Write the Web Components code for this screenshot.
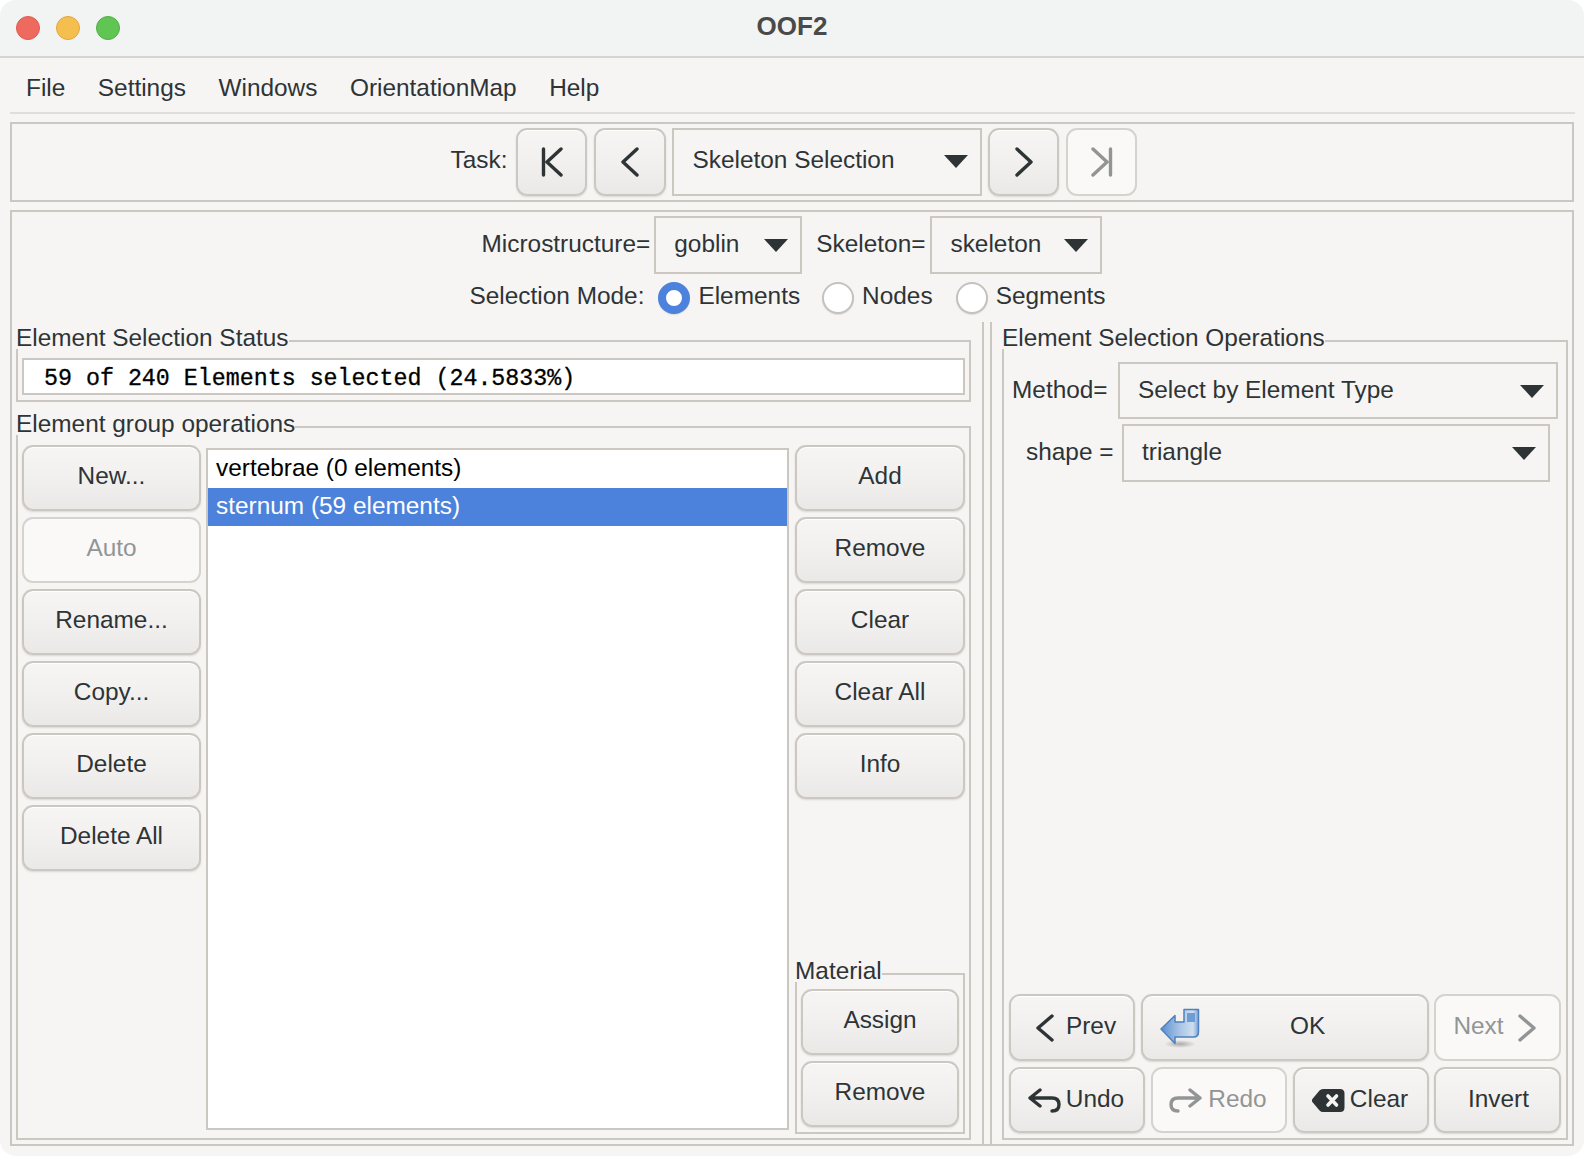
<!DOCTYPE html>
<html>
<head>
<meta charset="utf-8">
<title>OOF2</title>
<style>
  html, body { margin: 0; background: #fff; }
  body { font: 24.4px "Liberation Sans", Arial, sans-serif; color: #2e3436; }
</style>
</head>
<body>
<oof-window>
  <oof-taskbar></oof-taskbar>
  <oof-selection-page></oof-selection-page>
</oof-window>

<script>
const LINE = "#cdc7c2";

class OofWindow extends HTMLElement {
  constructor() {
    super();
    this.attachShadow({ mode: "open" });
  }
  connectedCallback() {
    this.shadowRoot.innerHTML = `
      <style>
        :host {
          display: flex;
          flex-direction: column;
          width: 1584px;
          height: 1156px;
          background: #f6f5f4;
          border-radius: 16px;
          overflow: hidden;
        }
        .title {
          flex: none;
          height: 58px;
          padding-bottom: 4px;
          box-sizing: border-box;
          display: flex;
          align-items: center;
          justify-content: center;
          position: relative;
          background: #f2f4f3;
          border-bottom: 2px solid #d6d3d1;
          font-weight: bold;
          font-size: 26px;
          color: #4a4a4a;
        }
        .lights { position: absolute; left: 16px; top: 16px; display: flex; gap: 16px; }
        .lights i { width: 24px; height: 24px; border-radius: 50%; box-sizing: border-box; }
        .r { background: #ee6a5f; border: 1px solid #dd5a50; }
        .y { background: #f5bf4f; border: 1px solid #dfa73f; }
        .g { background: #61c554; border: 1px solid #52ad46; }
        nav {
          flex: none;
          height: 56px;
          box-sizing: border-box;
          margin: 0 9px 8px 10px;
          padding: 6px 0 0 16px;
          display: flex;
          align-items: center;
          gap: 32.5px;
          border-bottom: 2px solid #e0dedb;
        }
      </style>
      <div class="title">
        <div class="lights"><i class="r"></i><i class="y"></i><i class="g"></i></div>
        OOF2
      </div>
      <nav>
        <span>File</span><span>Settings</span><span>Windows</span><span>OrientationMap</span><span>Help</span>
      </nav>
      <slot></slot>
    `;
  }
}
customElements.define("oof-window", OofWindow);

class OofButton extends HTMLElement {
  constructor() {
    super();
    this.attachShadow({ mode: "open" });
  }
  connectedCallback() {
    this.shadowRoot.innerHTML = `
      <style>
        :host {
          display: flex;
          box-sizing: border-box;
          height: 66px;
          flex: none;
          align-items: center;
          justify-content: center;
          gap: 7px;
          padding-bottom: 5px;
          border: 2px solid ${LINE};
          border-radius: 11px;
          background: linear-gradient(#f6f5f4, #f2f1f0 45%, #ebe9e7);
          box-shadow: inset 0 1px 0 #fff, 0 1px 2px rgba(0,0,0,.12);
          white-space: nowrap;
        }
        :host([disabled]) {
          background: #faf9f8;
          color: #929595;
          box-shadow: none;
          border-color: #d6d2ce;
        }
        ::slotted(svg) { flex: none; display: block; }
      </style>
      <slot name="icon"></slot><slot></slot>
    `;
  }
}
customElements.define("oof-button", OofButton);

class OofCombo extends HTMLElement {
  constructor() {
    super();
    this.attachShadow({ mode: "open" });
  }
  connectedCallback() {
    this.shadowRoot.innerHTML = `
      <style>
        :host {
          display: flex;
          box-sizing: border-box;
          flex: none;
          height: 58px;
          align-items: center;
          justify-content: space-between;
          padding: 0 12px 3px 18px;
          border: 2px solid ${LINE};
        }
        i {
          width: 0; height: 0;
          margin-top: 3px;
          border-left: 12px solid transparent;
          border-right: 12px solid transparent;
          border-top: 13px solid #2e3436;
        }
      </style>
      <span><slot></slot></span><i></i>
    `;
  }
}
customElements.define("oof-combo", OofCombo);

class OofRadio extends HTMLElement {
  constructor() {
    super();
    this.attachShadow({ mode: "open" });
  }
  connectedCallback() {
    this.shadowRoot.innerHTML = `
      <style>
        :host {
          display: flex;
          align-items: center;
          gap: 8px;
          height: 32px;
        }
        i {
          flex: none;
          width: 32px; height: 32px;
          box-sizing: border-box;
          border-radius: 50%;
          background: #fff;
          border: 2px solid #c6c1bc;
          box-shadow: 0 1px 1px rgba(0,0,0,.1);
        }
        :host([checked]) i {
          background: #fff;
          border: 8px solid #4c82dc;
        }
        span { margin-top: -5px; }
      </style>
      <i></i><span><slot></slot></span>
    `;
  }
}
customElements.define("oof-radio", OofRadio);

class OofFrame extends HTMLElement {
  constructor() {
    super();
    this.attachShadow({ mode: "open" });
  }
  connectedCallback() {
    this.shadowRoot.innerHTML = `
      <style>
        :host { display: flex; flex-direction: column; box-sizing: border-box; }
        .head { flex: none; display: flex; height: 25px; }
        .label { height: 28px; line-height: 28px; white-space: nowrap; }
        .line {
          flex: 1;
          margin-top: 16px;
          border-top: 2px solid ${LINE};
          border-right: 2px solid ${LINE};
        }
        .body {
          flex: 1;
          min-height: 0;
          display: flex;
          flex-direction: var(--frame-dir, column);
          padding: var(--frame-pad, 0);
          gap: var(--frame-gap, 0);
          border: 2px solid ${LINE};
          border-top: 0;
        }
      </style>
      <div class="head"><div class="label">${this.getAttribute("label")}</div><div class="line"></div></div>
      <div class="body"><slot></slot></div>
    `;
  }
}
customElements.define("oof-frame", OofFrame);

class OofTaskbar extends HTMLElement {
  constructor() {
    super();
    this.attachShadow({ mode: "open" });
  }
  connectedCallback() {
    this.shadowRoot.innerHTML = `
      <style>
        :host {
          flex: none;
          display: flex;
          align-items: center;
          justify-content: center;
          box-sizing: border-box;
          height: 80px;
          margin: 0 10px 8px;
          padding-left: 4px;
          border: 2px solid ${LINE};
        }
        span { margin: -5px 9px 0 0; }
        oof-button { width: 71px; height: 68px; margin-right: 7px; padding-bottom: 0; }
        oof-button.near { width: 72px; margin-right: 6px; }
        oof-combo { width: 310px; height: 68px; margin-right: 6px; padding-bottom: 5px; }
        svg { fill: none; stroke: #2e3436; stroke-width: 3.4; stroke-linecap: round; stroke-linejoin: round; }
        [disabled] svg { stroke: #929595; }
        oof-button:last-child { margin-right: 0; }
      </style>
      <span>Task:</span>
      <oof-button><svg slot="icon" width="22" height="30" viewBox="0 0 22 30" style="margin-left:1px"><path d="M2.5 2v26M20 2 6 15l14 13"/></svg></oof-button>
      <oof-button class="near"><svg slot="icon" width="18" height="30" viewBox="0 0 18 30"><path d="M16 2 2 15l14 13"/></svg></oof-button>
      <oof-combo>Skeleton Selection</oof-combo>
      <oof-button><svg slot="icon" width="18" height="30" viewBox="0 0 18 30"><path d="M2 2l14 13L2 28"/></svg></oof-button>
      <oof-button disabled><svg slot="icon" width="22" height="30" viewBox="0 0 22 30" style="margin-left:1px"><path d="M2 2l14 13L2 28M19.500 2v26"/></svg></oof-button>
    `;
  }
}
customElements.define("oof-taskbar", OofTaskbar);

class OofSelectionPage extends HTMLElement {
  constructor() {
    super();
    this.attachShadow({ mode: "open" });
  }
  connectedCallback() {
    this.shadowRoot.innerHTML = `
      <style>
        :host {
          flex: none;
          display: flex;
          flex-direction: column;
          box-sizing: border-box;
          height: 936px;
          margin: 0 10px;
          border: 2px solid ${LINE};
        }
        .pick { display: flex; justify-content: center; align-items: center; margin-top: 4px; }
        .pick span { margin-top: -3px; }
        .mode { display: flex; justify-content: center; align-items: center; margin-top: 8px; padding-right: 9px; }
        .mode > span { margin: -5px 14px 0 0; }
        .mode oof-radio { margin-right: 23px; }
        .mode oof-radio[checked] { margin-right: 22px; }
        .mode oof-radio:last-child { margin-right: 0; }
        .paned { flex: 1; min-height: 0; display: flex; margin-top: 8px; }
        .left { flex: none; width: 970px; box-sizing: border-box; padding: 2px 11px 4px 4px; display: flex; flex-direction: column; }
        .handle { flex: none; width: 10px; box-sizing: border-box; border: 2px solid ${LINE}; border-width: 0 2px; }
        .right { flex: 1; min-width: 0; box-sizing: border-box; padding: 2px 4px 4px 10px; display: flex; }
        .status { --frame-pad: 9px 4px 5px 4px; margin-bottom: 8px; }
        .entry {
          height: 37px;
          box-sizing: border-box;
          border: 2px solid ${LINE};
          background: #fff;
          padding-left: 20px;
          font: 23.3px/38px "Liberation Mono", "Courier New", monospace;
          -webkit-text-stroke: .3px #000;
          color: #000;
          white-space: pre;
          overflow: hidden;
        }
        .group { flex: 1; min-height: 0; --frame-pad: 10px 4px 4px 4px; --frame-dir: row; --frame-gap: 5px; }
        .col { flex: none; display: flex; flex-direction: column; gap: 6px; }
        .col.l { width: 179px; }
        .col.r { width: 170px; margin-left: 1px; }
        .list {
          flex: 1;
          margin: 3px 0 4px;
          border: 2px solid ${LINE};
          background: #fff;
          color: #000;
        }
        .list div { height: 38px; line-height: 35px; padding-left: 8px; }
        .list .on { background: #4c82dc; color: #fff; }
        .material { margin-top: auto; height: 177px; --frame-dir: column; --frame-pad: 7px 4px 5px 4px; --frame-gap: 6px; }
        .ops { flex: 1; min-width: 0; --frame-pad: 13px 5px 5px 5px; }
        .row { display: flex; align-items: center; }
        .row span { margin-top: -3px; white-space: nowrap; }
        .bottom { display: flex; gap: 6px; }
        .bottom.one { margin-top: auto; }
        .bottom.two { margin-top: 6px; }
        .bottom.one oof-button { height: 67px; padding-bottom: 3px; }
        .bottom.two oof-button { padding-bottom: 2px; padding-right: 2px; gap: 5px; }
        svg { fill: none; stroke: #2e3436; stroke-width: 3.4; stroke-linecap: round; stroke-linejoin: round; }
        [disabled] svg { stroke: #929595; }
      </style>
      <div class="pick">
        <span style="margin-right:4px">Microstructure=</span>
        <oof-combo style="width:148px">goblin</oof-combo>
        <span style="margin:-3px 5px 0 14px">Skeleton=</span>
        <oof-combo style="width:172px">skeleton</oof-combo>
      </div>
      <div class="mode">
        <span>Selection Mode:</span>
        <oof-radio checked>Elements</oof-radio>
        <oof-radio>Nodes</oof-radio>
        <oof-radio>Segments</oof-radio>
      </div>
      <div class="paned">
        <div class="left">
          <oof-frame class="status" label="Element Selection Status">
            <div class="entry">59 of 240 Elements selected (24.5833%)</div>
          </oof-frame>
          <oof-frame class="group" label="Element group operations">
            <div class="col l">
              <oof-button>New...</oof-button>
              <oof-button disabled>Auto</oof-button>
              <oof-button>Rename...</oof-button>
              <oof-button>Copy...</oof-button>
              <oof-button>Delete</oof-button>
              <oof-button>Delete All</oof-button>
            </div>
            <div class="list">
              <div>vertebrae (0 elements)</div>
              <div class="on">sternum (59 elements)</div>
            </div>
            <div class="col r">
              <oof-button>Add</oof-button>
              <oof-button>Remove</oof-button>
              <oof-button>Clear</oof-button>
              <oof-button>Clear All</oof-button>
              <oof-button>Info</oof-button>
              <oof-frame class="material" label="Material">
                <oof-button>Assign</oof-button>
                <oof-button>Remove</oof-button>
              </oof-frame>
            </div>
          </oof-frame>
        </div>
        <div class="handle"></div>
        <div class="right">
          <oof-frame class="ops" label="Element Selection Operations">
            <div class="row" style="padding-left:3px">
              <span style="width:106px;margin-top:-1px">Method=</span>
              <oof-combo style="width:440px;height:57px;padding-bottom:1px">Select by Element Type</oof-combo>
            </div>
            <div class="row" style="margin-top:5px;padding-left:17px">
              <span style="width:96px">shape =</span>
              <oof-combo style="width:428px">triangle</oof-combo>
            </div>
            <div class="bottom one">
              <oof-button style="width:126px;padding-left:8px;gap:12px">
                <svg slot="icon" width="18" height="28" viewBox="0 0 18 28" style="margin-top:3px"><path d="M16 2 2 14l14 12"/></svg>Prev
              </oof-button>
              <oof-button style="width:288px;justify-content:flex-start;padding-left:17px;gap:90px">
                <svg slot="icon" width="40" height="40" viewBox="0 0 40 40" style="stroke:none;margin-top:3px">
                  <defs>
                    <linearGradient id="okfill" x1="0" x2="1" y1="0" y2="0">
                      <stop offset="0" stop-color="#5a90d0"/>
                      <stop offset=".5" stop-color="#a9c4e4"/>
                      <stop offset=".85" stop-color="#cfdff0"/>
                      <stop offset="1" stop-color="#7aa3d6"/>
                    </linearGradient>
                    <radialGradient id="okshade">
                      <stop offset="0" stop-color="#000" stop-opacity=".28"/>
                      <stop offset="1" stop-color="#000" stop-opacity="0"/>
                    </radialGradient>
                  </defs>
                  <ellipse cx="20" cy="36" rx="16" ry="4" fill="url(#okshade)"/>
                  <path d="M1 21 15 7.500V14h9V1.500h14.500V24q0 5-5 5H15v6.500z" fill="url(#okfill)" stroke="#4f80bf" stroke-width="1.500" stroke-linejoin="round"/>
                  <path d="M27 5h8v9h-8z" fill="#6f9cd2"/>
                </svg>OK
              </oof-button>
              <oof-button disabled style="width:127px;margin-left:-1px;padding-right:6px;gap:14px">Next
                <svg width="18" height="28" viewBox="0 0 18 28" style="margin-top:3px"><path d="M2 2l14 12L2 26"/></svg>
              </oof-button>
            </div>
            <div class="bottom two">
              <oof-button style="width:136px">
                <svg slot="icon" width="33" height="26" viewBox="0 0 33 26" style="margin-top:2px"><path d="M12 3 2 11l10 8M2 11h22q7 0 7 6.500T24 24"/></svg>Undo
              </oof-button>
              <oof-button disabled style="width:136px;gap:6px">
                <svg slot="icon" width="33" height="26" viewBox="0 0 33 26" style="margin-top:2px"><path d="M21 3l10 8-10 8M31 11H9q-7 0-7 6.500T9 24"/></svg>Redo
              </oof-button>
              <oof-button style="width:136px">
                <svg slot="icon" width="33" height="25" viewBox="0 0 33 25" style="stroke:none;fill:#2e3436;margin-top:2px"><path d="M11 1h17q4.500 0 4.500 4.500v14q0 4.500-4.500 4.500H11q-2 0-3.500-1.500L.8 14.500q-1.800-2 0-4L7.500 2.500Q9 1 11 1z"/><path d="M16 8l8.500 9M24.500 8 16 17" style="stroke:#f6f5f4;stroke-width:3.600;fill:none"/></svg>Clear
              </oof-button>
              <oof-button style="width:127px;margin-left:-1px;padding-right:0;padding-left:2px">Invert</oof-button>
            </div>
          </oof-frame>
        </div>
      </div>
    `;
  }
}
customElements.define("oof-selection-page", OofSelectionPage);
</script>
</body>
</html>
